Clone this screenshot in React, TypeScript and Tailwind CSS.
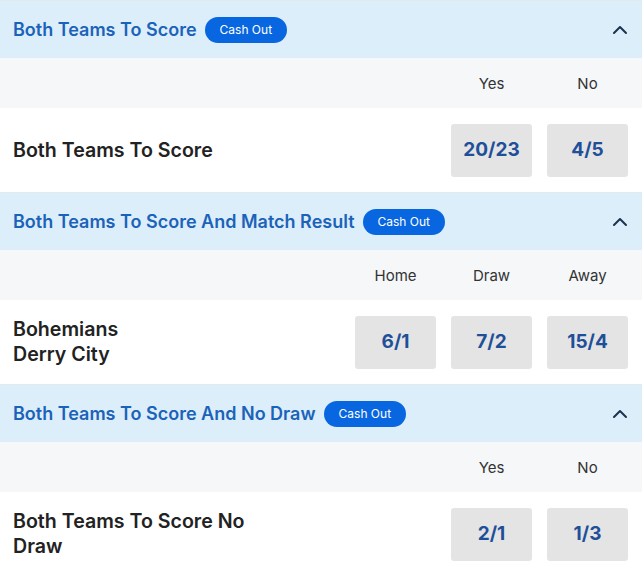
import { ChevronUp } from "lucide-react";

type Market = {
    title: string;
    labels: string[];
    name: string[];
    odds: string[];
};

const markets: Market[] = [
    { title: "Both Teams To Score", labels: ["Yes", "No"], name: ["Both Teams To Score"], odds: ["20/23", "4/5"] },
    { title: "Both Teams To Score And Match Result", labels: ["Home", "Draw", "Away"], name: ["Bohemians", "Derry City"], odds: ["6/1", "7/2", "15/4"] },
    { title: "Both Teams To Score And No Draw", labels: ["Yes", "No"], name: ["Both Teams To Score No Draw"], odds: ["2/1", "1/3"] },
];

function MarketBlock({ market }: { market: Market }) {
    return (
        <div className="border-t border-[#e3e8ee]">
            {/* Header */}
            <div className="flex h-[57px] items-center justify-between bg-[#ddeefb] pl-[13px] pr-[10px]">
                <div className="flex items-center gap-2">
                    <h2 className="text-[18px] font-semibold text-[#1b63b9]">{market.title}</h2>
                    <span className="flex h-[26px] items-center rounded-full bg-[#0866e0] px-[15px] text-[12px] text-white">
                        Cash Out
                    </span>
                </div>
                <ChevronUp size={24} strokeWidth={2} className="text-[#1a3350]" />
            </div>

            {/* Column labels */}
            <div className="flex h-[50px] items-center justify-end gap-[15px] bg-[#f5f7f9] pr-[14px]">
                {market.labels.map(label => (
                    <div key={label} className="w-[81px] pt-[2px] text-center text-[15px] text-[#333]">{label}</div>
                ))}
            </div>

            {/* Selections */}
            <div className="flex h-[84px] items-center justify-between bg-white pl-[13px] pr-[14px]">
                <div className="max-w-[250px] text-[19.6px] font-semibold leading-[25px] text-[#222]">
                    {market.name.map(n => (
                        <div key={n}>{n}</div>
                    ))}
                </div>
                <div className="flex gap-[15px]">
                    {market.odds.map(o => (
                        <button
                            key={o}
                            className="flex h-[53px] w-[81px] items-center justify-center rounded-[3px] bg-[#e4e4e4] text-[19px] font-bold text-[#1f4f99]"
                        >
                            {o}
                        </button>
                    ))}
                </div>
            </div>
        </div>
    );
}

export default function App() {
    return (
        <div className="w-[642px] bg-white" style={{ fontFamily: "Inter, 'Noto Sans', sans-serif" }}>
            {markets.map(m => (
                <MarketBlock key={m.title} market={m} />
            ))}
        </div>
    );
}
